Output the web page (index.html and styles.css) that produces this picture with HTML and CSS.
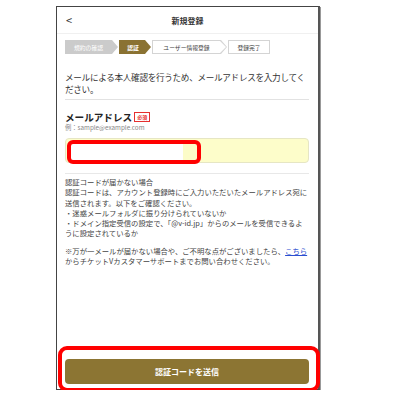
FILE: index.html
```html
<!DOCTYPE html>
<html lang="ja">
<head>
    <meta charset="UTF-8">
    <title>新規登録</title>
    <link rel="stylesheet" href="styles.css">
</head>
<body>

<div class="phone">
    <div class="header">
        <span class="back">&lt;</span>
        <div class="header-title">新規登録</div>
    </div>

    <div class="steps">
        <div class="step step-done">規約の確認</div>
        <div class="step step-current">認証</div>
        <div class="step step-next">ユーザー情報登録</div>
        <div class="step step-next step-last">登録完了</div>
    </div>

    <p class="intro">メールによる本人確認を行うため、メールアドレスを入力してください。</p>

    <div class="field">
        <div class="field-label">メールアドレス <span class="required">必須</span></div>
        <div class="field-hint">例：sample@example.com</div>
        <div class="input-box">
            <!-- 入力済みアドレスを隠すマーカー -->
            <div class="mask"></div>
        </div>
    </div>

    <div class="notice">
        <p>
            認証コードが届かない場合<br>
            認証コードは、アカウント登録時にご入力いただいたメールアドレス宛に<br>
            送信されます。以下をご確認ください。<br>
            ・迷惑メールフォルダに振り分けられていないか<br>
            ・ドメイン指定受信の設定で、「@v-id.jp」からのメールを受信できるよ<br>
            うに設定されているか
        </p>
        <p>
            ※万が一メールが届かない場合や、ご不明な点がございましたら、<a href="#" class="notice-link">こちら</a><br>
            からチケットVカスタマーサポートまでお問い合わせください。
        </p>
    </div>

    <div class="submit-area">
        <button class="submit-btn" type="button">認証コードを送信</button>
        <div class="highlight"></div>
    </div>
</div>

</body>
</html>
```

FILE: styles.css
```css
body, html {
    margin: 0;
    padding: 0;
    background: #fff;
}
body {
    padding: 6px 0 0 56px;
    font-family: "Noto Sans CJK JP", "Noto Sans", sans-serif;
    color: #333;
}
.phone {
    box-sizing: border-box;
    width: 264px;
    height: 384px;
    border: 1px solid #444;
    border-right: 2px solid #555;
    box-shadow: 1px 1px 0 #999;
    display: flex;
    flex-direction: column;
    padding: 0 9px 0 8px;
}
.header {
    height: 26px;
    margin: 0 -9px 0 -8px;
    padding: 0 8px 0 9px;
    display: flex;
    align-items: center;
    border-bottom: 1px solid #f0f0f0;
}
.back {
    font-size: 11px;
    color: #333;
}
.header-title {
    flex: 1;
    text-align: center;
    font-size: 8px;
    font-weight: 700;
    margin-right: 7px;
}

/* ステップ表示 */
.steps {
    display: flex;
    margin-top: 6px;
    height: 14px;
}
.step {
    position: relative;
    display: flex;
    align-items: center;
    justify-content: center;
    font-size: 5.8px;
    box-sizing: border-box;
    clip-path: polygon(0 0, calc(100% - 6px) 0, 100% 50%, calc(100% - 6px) 100%, 0 100%);
    margin-right: 1px;
}
.step-done {
    width: 53px;
    background: #cbcbcb;
    color: #fff;
    padding-right: 6px;
}
.step-current {
    width: 32px;
    background: #8a7232;
    color: #fff;
    font-weight: 700;
    padding-right: 4px;
}
.step-next {
    width: 75px;
    background: #d4d4d4;
    color: #444;
    padding-right: 6px;
    z-index: 0;
}
.step-next::before {
    content: "";
    position: absolute;
    top: 1px;
    left: 1px;
    right: 1px;
    bottom: 1px;
    background: #fff;
    clip-path: polygon(0 0, calc(100% - 6px) 0, 100% 50%, calc(100% - 6px) 100%, 0 100%);
    z-index: -1;
}
.step-last {
    width: 42px;
    clip-path: none;
    padding-right: 0;
}
.step-last::before {
    clip-path: none;
}

.intro {
    margin: 17px 0 0 0;
    font-size: 8.6px;
    letter-spacing: -0.3px;
    line-height: 12px;
    color: #333;
    word-break: break-all;
    padding-bottom: 4px;
    border-bottom: 1px solid #e2e2e2;
}

.field {
    margin-top: 11px;
}
.field-label {
    font-size: 9.6px;
    font-weight: 700;
    line-height: 12px;
    color: #222;
    display: flex;
    align-items: center;
    gap: 2px;
}
.required {
    font-size: 5px;
    color: #e53030;
    border: 1px solid #e53030;
    padding: 1px 2px;
    line-height: 6px;
    font-weight: 700;
}
.field-hint {
    font-size: 6.3px;
    line-height: 9px;
    color: #888;
}
.input-box {
    position: relative;
    margin-top: 6px;
    height: 25px;
    box-sizing: border-box;
    border: 1px solid #e6e6c4;
    border-radius: 4px;
    background: #fdfdca;
}
.mask {
    position: absolute;
    left: 1px;
    top: 1px;
    width: 126px;
    height: 16px;
    border: 4px solid #f00;
    border-radius: 6px;
    background: linear-gradient(to right, #fff 0, #fff 89%, #fcfcc8 89%);
}

.notice {
    margin-top: 10px;
    padding-top: 3px;
    border-top: 1px solid #e8e8e8;
    font-size: 7.35px;
    line-height: 10.3px;
    color: #444;
    white-space: nowrap;
}
.notice p {
    margin: 0 0 7px 0;
}
.notice-link {
    color: #2a4fd0;
    text-decoration: underline;
}

.submit-area {
    margin-top: auto;
    margin-bottom: 5px;
    position: relative;
}
.submit-btn {
    display: block;
    width: 100%;
    height: 25px;
    border: none;
    border-radius: 4px;
    background: #8c7533;
    color: #fff;
    font-family: inherit;
    font-size: 8px;
    font-weight: 700;
    cursor: pointer;
}
/* 赤枠の注記 */
.highlight {
    position: absolute;
    left: -7px;
    right: -11px;
    top: -13px;
    bottom: -8px;
    border: 4px solid #f00;
    border-radius: 9px;
}
```
